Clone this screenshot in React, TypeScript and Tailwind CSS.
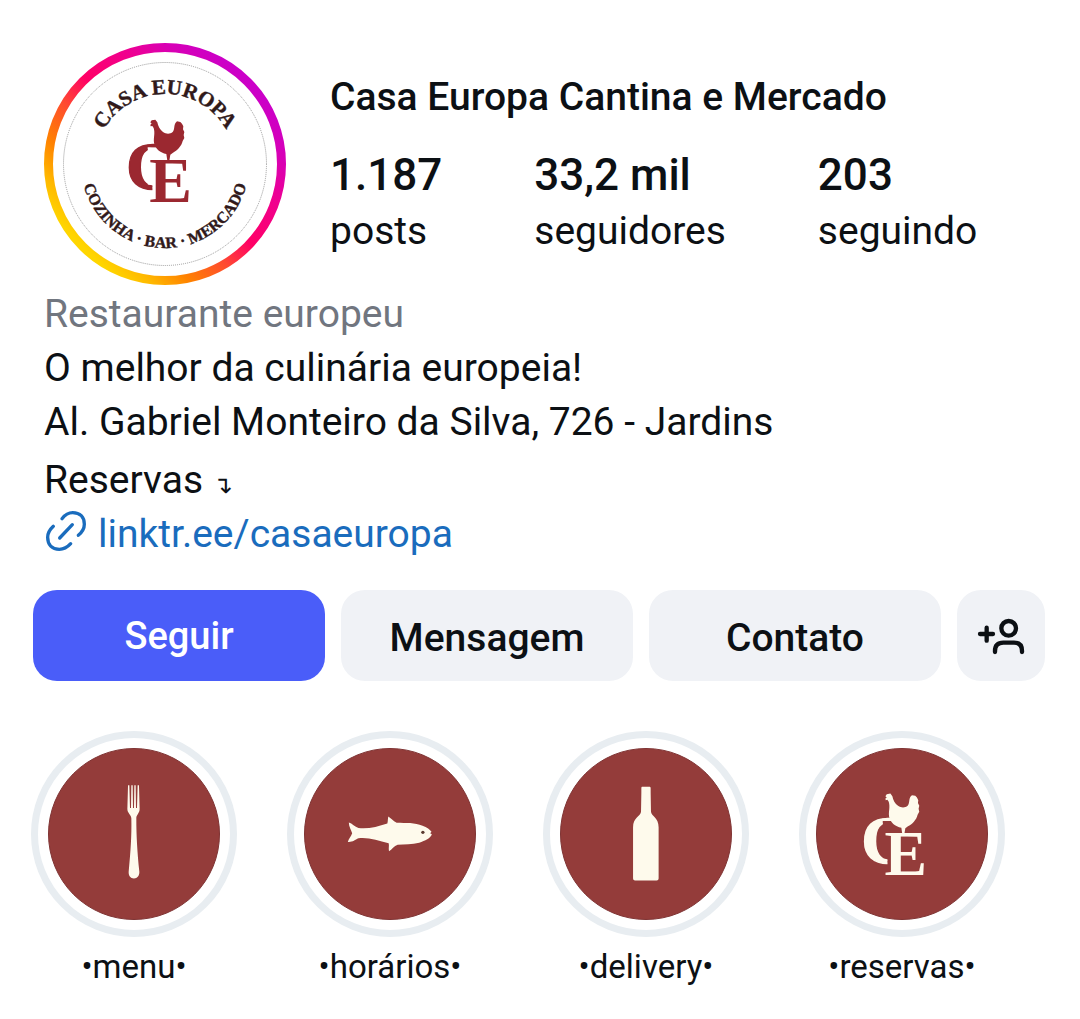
import React from "react";

type MonogramProps = { ink: string; ground: string; clip: string };

function Monogram({ ink, ground, clip }: MonogramProps) {
  return (
    <g fill={ink} fontFamily="'Liberation Serif', serif" fontWeight="bold">
      <clipPath id={clip}>
        <path d="M190 250H290V286H262V398H276V430H190Z" />
      </clipPath>
      <text x="197" y="412" fontSize="204" stroke={ink} strokeWidth="4" clipPath={`url(#${clip})`}>C</text>
      <text x="267" y="450" fontSize="192" stroke={ground} strokeWidth="5" paintOrder="stroke">E</text>
      <path d="M270 211L274 205L285 203L291 211C293 223 299 233 308 240C318 247 330 246 337 240C344 231 340 220 346 212L350 208L360 210L365 215L369 223L368 232L372 240L370 249L372 258L367 267C364 282 350 296 338 302L330 308L327 326H321L318 306C300 302 284 290 281 272C279 257 285 244 280 228L276 222L271 223L270 218L274 215Z" />
    </g>
  );
}

function Avatar() {
  return (
    <svg viewBox="0 0 242 242" className="size-[242px]" role="img" aria-label="Casa Europa">
      <defs>
        <linearGradient id="story" x1="0.146" y1="0.854" x2="0.854" y2="0.146">
          <stop offset="0" stopColor="#ffd600" />
          <stop offset="0.1" stopColor="#ffb800" />
          <stop offset="0.22" stopColor="#ff8200" />
          <stop offset="0.38" stopColor="#ff4a30" />
          <stop offset="0.52" stopColor="#ff0066" />
          <stop offset="0.72" stopColor="#f0008f" />
          <stop offset="0.87" stopColor="#d800b5" />
          <stop offset="1" stopColor="#cb00c8" />
        </linearGradient>
        <path id="arc-top" d="M51 121A70 70 0 0 1 191 121" />
        <path id="arc-bottom" d="M37 121A84 84 0 0 0 205 121" />
      </defs>
      <circle cx="121" cy="121" r="116.5" fill="none" stroke="url(#story)" strokeWidth="9" />
      <circle cx="121" cy="121" r="101.5" fill="none" stroke="#999" strokeWidth="1" strokeDasharray="1 1" />
      <g
        fill="#30191a"
        stroke="#30191a"
        strokeWidth="0.4"
        fontFamily="'Liberation Serif', serif"
        fontWeight="bold"
        textAnchor="middle"
      >
        <text fontSize="21">
          <textPath href="#arc-top" startOffset="50%">CASA EUROPA</textPath>
        </text>
        <text fontSize="16">
          <textPath href="#arc-bottom" startOffset="50%">COZINHA · BAR · MERCADO</textPath>
        </text>
      </g>
      <svg x="-9" y="-8" width="260" height="260" viewBox="-76 -51 780 780">
        <Monogram ink="#9b2830" ground="#fff" clip="mono-avatar" />
      </svg>
    </svg>
  );
}

const cream = "#fefaec";

const highlights = [
  {
    label: "•menu•",
    box: "55 69 512 512",
    art: (
      <path
        fill={cream}
        d="M293 178H297L299 247H302L303 178H307L308 247H311L312 178H316L317 247H320L322 178H326L328 250C328 262 318 268 318 278C318 330 321 375 327 438C328 450 321 459 311 459C300 459 294 450 295 438C301 375 304 330 303 278C303 268 291 262 291 250Z"
      />
    ),
  },
  {
    label: "•horários•",
    box: "58 69 512 512",
    art: (
      <>
        <path
          fill={cream}
          d="M190 290C200 293 208 303 219 307C248 311 277 302 306 293C308 286 307 279 309 272C317 277 323 285 334 291C362 292 389 290 412 300C425 305 435 312 439 318L435 323L440 326C436 338 420 346 402 351C380 357 358 356 337 357C326 361 320 371 311 377C309 368 312 361 310 353C278 345 248 334 219 338C208 343 202 350 187 349C190 339 197 332 200 323C197 312 190 303 190 290Z"
        />
        <circle cx="413" cy="320" r="5" fill="#5a3a30" />
      </>
    ),
  },
  {
    label: "•delivery•",
    box: "61 69 512 512",
    art: (
      <path
        fill={cream}
        d="M305 183H328Q331 183 331 187V200L332 258C333 272 355 275 355 305V459Q355 465 349 465H284Q278 465 278 459V305C278 275 301 272 302 258L303 200V187Q303 183 305 183Z"
      />
    ),
  },
  {
    label: "•reservas•",
    box: "64 69 512 512",
    art: <Monogram ink={cream} ground="#943c3a" clip="mono-highlight" />,
  },
];

const stats = [
  { value: "1.187", label: "posts" },
  { value: "33,2 mil", label: "seguidores" },
  { value: "203", label: "seguindo" },
];

export default function App() {
  return (
    <main className="min-h-screen bg-white pt-[43px] pb-8 font-['Roboto',sans-serif] text-[#0c1014]">
      <header className="flex gap-11 pl-11">
        <div className="shrink-0">
          <Avatar />
        </div>
        <div className="pt-7">
          <h1 className="text-[39px] leading-[52px] font-medium whitespace-nowrap">Casa Europa Cantina e Mercado</h1>
          <ul className="mt-6 flex gap-[92px]">
            {stats.map((s) => (
              <li key={s.label} className="whitespace-nowrap">
                <strong className="block text-[44px] leading-[56px] font-medium">{s.value}</strong>
                <span className="block text-[39px] leading-[56px]">{s.label}</span>
              </li>
            ))}
          </ul>
        </div>
      </header>

      <section className="mt-0.5 pl-11 text-[39px] leading-[54px]">
        <p className="text-[#71767f]">Restaurante europeu</p>
        <p>O melhor da culinária europeia!</p>
        <p>Al. Gabriel Monteiro da Silva, 726 - Jardins</p>
        <p className="pt-1">
          Reservas <span className="font-['DejaVu_Sans',sans-serif] text-2xl leading-none">↴</span>
        </p>
        <a href="https://linktr.ee/casaeuropa" className="flex items-start gap-3 text-[#1a6cbd]">
          <svg
            viewBox="0 0 120 120"
            className="mt-1 ml-0.5 size-10"
            fill="none"
            stroke="currentColor"
            strokeWidth="10"
            strokeLinecap="round"
            aria-hidden="true"
          >
            <path d="M48 23C59 9 70 5 80 5C102 5 115 18 115 40C115 54 108 64 97 73M22 46C10 57 5 66 5 79C5 102 18 115 40 115C54 115 63 110 74 98M41 81L79 41" />
          </svg>
          linktr.ee/casaeuropa
        </a>
      </section>

      <div className="mt-[29px] flex h-[91px] gap-4 pr-[35px] pl-[33px] text-[39px] font-medium">
        <button type="button" className="flex-1 rounded-3xl bg-[#4a5df9] pt-0.5 text-[38px] text-white">Seguir</button>
        <button type="button" className="flex-1 rounded-3xl bg-[#f0f2f6] pt-1.5">Mensagem</button>
        <button type="button" className="flex-1 rounded-3xl bg-[#f0f2f6] pt-1.5">Contato</button>
        <button
          type="button"
          aria-label="Sugestões de perfis"
          className="flex w-[88px] items-center justify-center rounded-3xl bg-[#f0f2f6]"
        >
          <svg
            viewBox="111 110 144 114"
            className="h-[38px] w-12"
            fill="none"
            stroke="currentColor"
            strokeWidth="13"
            strokeLinecap="round"
            aria-hidden="true"
          >
            <circle cx="206" cy="144" r="22" />
            <path d="M120 161H159M140 142V181M165 215V212C165 196 174 187 190 187H222C238 187 246 196 246 212V215" />
          </svg>
        </button>
      </div>

      <ul className="mt-[50px] flex gap-[50px] pl-[31px]">
        {highlights.map((h) => (
          <li key={h.label} className="w-[206px]">
            <button type="button" className="block w-full">
              <span className="flex size-[206px] items-center justify-center rounded-full border-[7px] border-[#e8edf1]">
                <span className="size-[172px] overflow-hidden rounded-full border border-[#7f3434] bg-[#943c3a]">
                  <svg viewBox={h.box} className="size-full" aria-hidden="true">
                    {h.art}
                  </svg>
                </span>
              </span>
              <span className="mt-2 block text-[33px] leading-[44px] whitespace-nowrap">{h.label}</span>
            </button>
          </li>
        ))}
      </ul>
    </main>
  );
}
